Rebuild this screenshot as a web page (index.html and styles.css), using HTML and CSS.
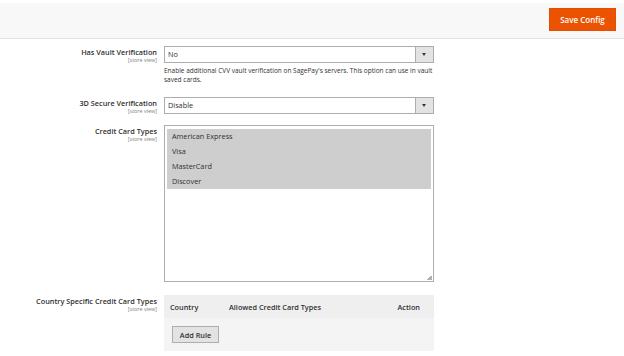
FILE: index.html
```html
<!DOCTYPE html>
<html lang="en">
<head>
  <meta charset="UTF-8">
  <title>Configuration</title>
  <link rel="stylesheet" href="styles.css">
</head>
<body>

  <div class="page-actions">
    <button class="btn-primary">Save Config</button>
  </div>

  <div class="fieldset">

    <div class="field row-vault">
      <div class="label">
        <span class="label-text">Has Vault Verification</span>
        <span class="scope">[store view]</span>
      </div>
      <div class="control">
        <div class="select">
          <span class="select-value">No</span>
          <span class="select-arrow"></span>
        </div>
        <p class="note">Enable additional CVV vault verification on SagePay's servers. This option can use in vault saved cards.</p>
      </div>
    </div>

    <div class="field row-3d">
      <div class="label">
        <span class="label-text">3D Secure Verification</span>
        <span class="scope">[store view]</span>
      </div>
      <div class="control">
        <div class="select">
          <span class="select-value">Disable</span>
          <span class="select-arrow"></span>
        </div>
      </div>
    </div>

    <div class="field row-cards">
      <div class="label">
        <span class="label-text">Credit Card Types</span>
        <span class="scope">[store view]</span>
      </div>
      <div class="control">
        <div class="multiselect">
          <div class="option selected">American Express</div>
          <div class="option selected">Visa</div>
          <div class="option selected">MasterCard</div>
          <div class="option selected">Discover</div>
          <span class="grip"></span>
        </div>
      </div>
    </div>

    <div class="field row-country">
      <div class="label">
        <span class="label-text">Country Specific Credit Card Types</span>
        <span class="scope">[store view]</span>
      </div>
      <div class="control">
        <div class="rule-table">
          <div class="rule-head">
            <span class="col-country">Country</span>
            <span class="col-types">Allowed Credit Card Types</span>
            <span class="col-action">Action</span>
          </div>
          <div class="rule-body">
            <button class="btn-secondary">Add Rule</button>
          </div>
        </div>
      </div>
    </div>

  </div>

</body>
</html>
```

FILE: styles.css
```css
*
    {
    margin: 0;
    padding: 0;
    box-sizing: border-box;
    }

:root
    {
    --txt: #303030;
    --gry: #808080;
    --brd: #adadad;
    --org: #eb5202;
    }

body
    {
    width: 624px;
    height: 356px;
    background-color: #ffffff;
    font-family: "Open Sans", "DejaVu Sans", sans-serif;
    color: var(--txt);
    overflow: hidden;
    }

.page-actions
    {
    display: flex;
    justify-content: flex-end;
    margin-top: 3px;
    height: 36px;
    padding: 5px 8px 0 0;
    background-color: #f8f8f8;
    border-bottom: 1px solid #e3e3e3;
    }

.btn-primary
    {
    width: 67px;
    height: 23px;
    background-color: var(--org);
    border: 1px solid #e04f02;
    font-family: inherit;
    font-size: 8px;
    font-weight: 600;
    color: #ffffff;
    }

.field
    {
    display: flex;
    gap: 7px;
    }

.row-vault
    {
    margin-top: 7px;
    }

.row-3d
    {
    margin-top: 13px;
    }

.row-cards
    {
    margin-top: 11px;
    }

.row-country
    {
    margin-top: 13px;
    }

.label
    {
    display: flex;
    flex-direction: column;
    align-items: flex-end;
    width: 157px;
    padding-top: 1px;
    text-align: right;
    }

.label-text
    {
    font-size: 7.3px;
    font-weight: 600;
    line-height: 10px;
    }

.scope
    {
    font-size: 5.4px;
    line-height: 6px;
    color: var(--gry);
    }

.control
    {
    width: 270px;
    }

.select
    {
    display: flex;
    height: 17px;
    border: 1px solid var(--brd);
    background-color: #ffffff;
    }

.select-value
    {
    flex: 1;
    padding-left: 3px;
    font-size: 7.3px;
    line-height: 15px;
    }

.select-arrow
    {
    position: relative;
    width: 18px;
    background-color: #e3e3e3;
    border-left: 1px solid var(--brd);
    }

.select-arrow::after
    {
    content: "";
    position: absolute;
    top: 6px;
    left: 6px;
    border-left: 2.5px solid transparent;
    border-right: 2.5px solid transparent;
    border-top: 3px solid #41362f;
    }

.note
    {
    margin-top: 3px;
    font-size: 6.5px;
    line-height: 9px;
    color: var(--txt);
    }

.multiselect
    {
    position: relative;
    height: 157px;
    padding: 3px 2px 2px;
    border: 1px solid var(--brd);
    }

.option
    {
    height: 15px;
    padding-left: 5px;
    font-size: 7.3px;
    line-height: 15px;
    }

.option.selected
    {
    background-color: #cecece;
    }

.grip
    {
    position: absolute;
    right: 1px;
    bottom: 1px;
    width: 5px;
    height: 5px;
    background: linear-gradient(135deg, transparent 50%, #b0b0b0 50%);
    }

.rule-table
    {
    height: 56px;
    background-color: #f2f2f2;
    }

.rule-head
    {
    display: flex;
    height: 23px;
    padding: 0 14px 0 6px;
    background-color: #efefef;
    font-size: 7.3px;
    font-weight: 600;
    line-height: 24px;
    }

.col-country
    {
    width: 59px;
    }

.col-types
    {
    flex: 1;
    }

.rule-body
    {
    padding: 8px 8px;
    background-color: #f4f4f4;
    height: 33px;
    }

.btn-secondary
    {
    display: block;
    width: 47px;
    height: 17px;
    background-color: #e3e3e3;
    border: 1px solid var(--brd);
    font-family: inherit;
    font-size: 7.3px;
    font-weight: 600;
    color: var(--txt);
    }
```
